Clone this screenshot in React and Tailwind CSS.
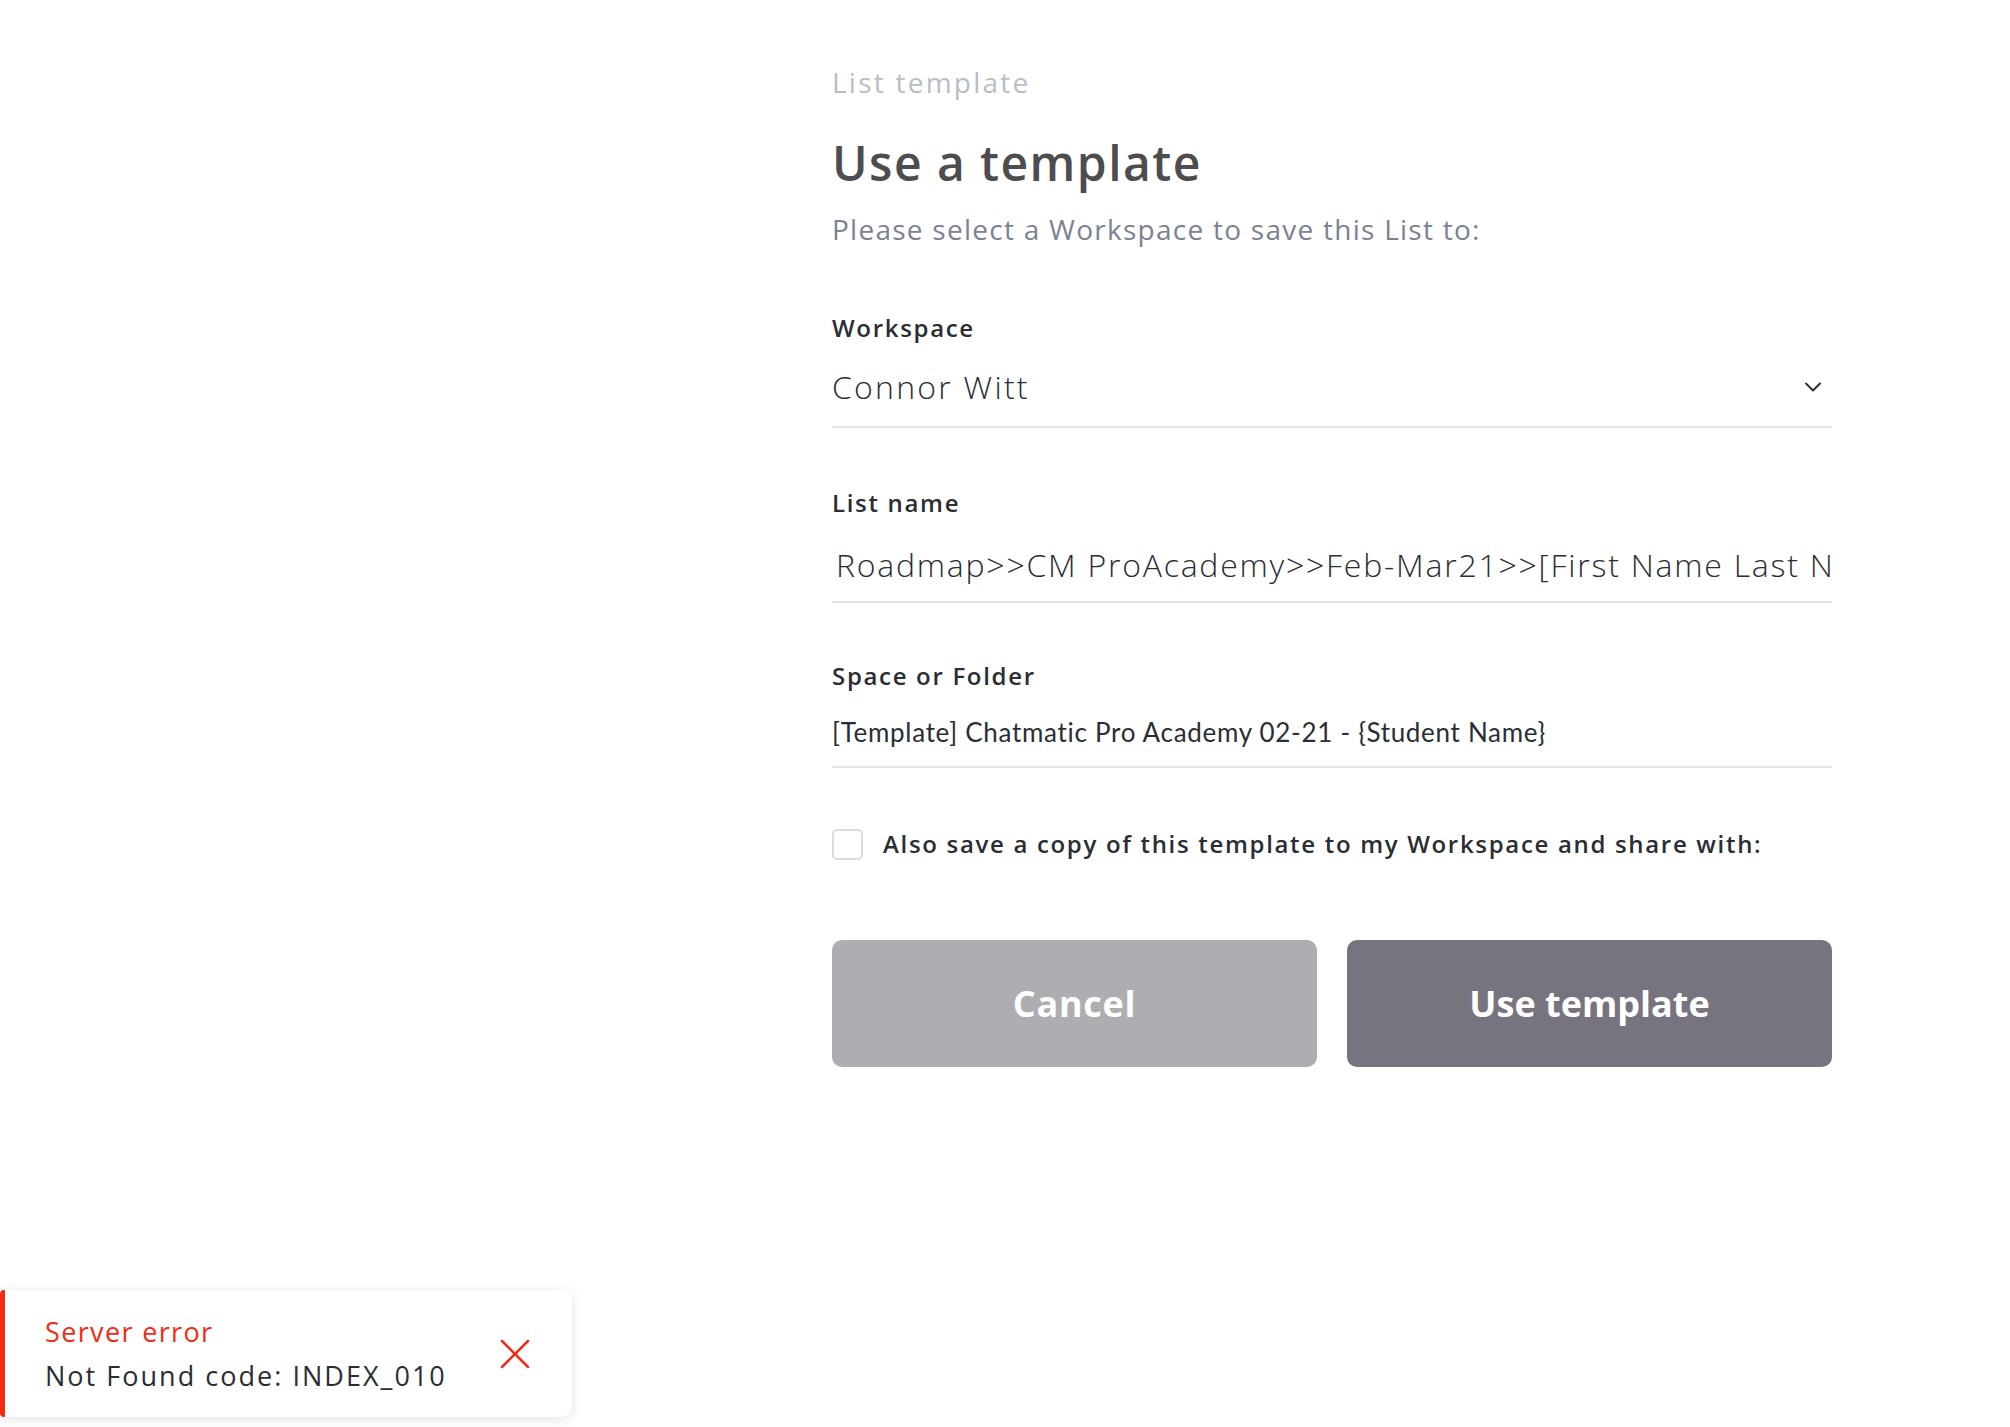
import React from 'react'

const sans = { fontFamily: '"Open Sans", "Noto Sans", sans-serif' }

const Chevron = () => (
  <svg width="18" height="12" viewBox="0 0 18 12" fill="none" className="mr-[10px]">
    <path d="M2 2.5 L9 9.5 L16 2.5" stroke="#2a2e34" strokeWidth="2" strokeLinecap="round" strokeLinejoin="round" />
  </svg>
)

const Label = ({ children }) => (
  <div className="text-[24px] leading-[32px] font-semibold tracking-[0.07em] text-[#2a2e34]">{children}</div>
)

const Toast = () => (
  <div className="absolute left-0 bottom-[10px] w-[572px] h-[127px] bg-white rounded-r-[10px] shadow-[0_2px_12px_rgba(0,0,0,0.12)] flex items-center">
    <div className="absolute left-0 top-0 bottom-0 w-[5px] bg-[#f52a12] rounded-l-[4px]" />
    <div className="pl-[45px] flex-1">
      <div className="text-[27px] leading-[40px] tracking-[0.05em] text-[#f52a12] font-medium">Server error</div>
      <div className="text-[27px] leading-[40px] tracking-[0.075em] text-[#2a2e34] font-medium mt-[4px]">Not Found code: INDEX_010</div>
    </div>
    <svg width="30" height="30" viewBox="0 0 30 30" className="mr-[42px]">
      <path d="M2 2 L28 28 M28 2 L2 28" stroke="#f52a12" strokeWidth="2.5" strokeLinecap="round" />
    </svg>
  </div>
)

const App = () => {
  return (
    <div className="relative w-[2010px] h-[1427px] bg-white overflow-hidden" style={sans}>
      <div className="pl-[832px] pt-[64px] w-[1832px]">
        <div className="w-[1000px]">
          <div className="text-[28px] leading-[36px] tracking-[0.08em] text-[#b8bdc7]">List template</div>
          <h1 className="mt-[35px] text-[48px] leading-[56px] font-semibold tracking-[0.03em] text-[#4d4d4f]">Use a template</h1>
          <p className="mt-[20px] text-[28px] leading-[36px] tracking-[0.045em] text-[#7b8291]">
            Please select a Workspace to save this List to:
          </p>

          <div className="mt-[65px]">
            <Label>Workspace</Label>
            <div className="mt-[23px] pb-[19px] border-b-2 border-[#e4e4e6] flex items-center justify-between">
              <span className="text-[32px] leading-[40px] font-light tracking-[0.07em] text-[#2a2e34]">Connor Witt</span>
              <Chevron />
            </div>
          </div>

          <div className="mt-[59px]">
            <Label>List name</Label>
            <div className="mt-[26px] pb-[16px] border-b-2 border-[#e4e4e6] overflow-hidden">
              <div className="pl-[4px] whitespace-nowrap overflow-hidden text-[32px] leading-[40px] font-light tracking-[0.055em] text-[#2a2e34]">
                Roadmap&gt;&gt;CM ProAcademy&gt;&gt;Feb-Mar21&gt;&gt;[First Name Last Name]
              </div>
            </div>
          </div>

          <div className="mt-[57px]">
            <Label>Space or Folder</Label>
            <div className="mt-[24px] pb-[18px] border-b-2 border-[#e4e4e6]">
              <div
                className="text-[26px] leading-[32px] tracking-[0.027em] text-[#2a2e34]"
                style={{ fontFamily: 'Lato, "Open Sans", sans-serif' }}
              >
                [Template] Chatmatic Pro Academy 02-21 - {'{'}Student Name{'}'}
              </div>
            </div>
          </div>

          <label className="mt-[60px] flex items-center gap-[20px]">
            <span className="w-[31px] h-[31px] rounded-[5px] border-2 border-[#dcdcde] bg-white shrink-0" />
            <span className="text-[24px] leading-[32px] font-semibold tracking-[0.07em] text-[#2a2e34]">
              Also save a copy of this template to my Workspace and share with:
            </span>
          </label>

          <div className="mt-[80px] flex gap-[30px]">
            <button className="flex-1 h-[127px] rounded-[10px] bg-[#afadb2] text-white text-[36px] font-bold tracking-[0.02em]">
              Cancel
            </button>
            <button className="flex-1 h-[127px] rounded-[10px] bg-[#77747f] text-white text-[36px] font-bold">
              Use template
            </button>
          </div>
        </div>
      </div>

      <Toast />
    </div>
  )
}

export default App
